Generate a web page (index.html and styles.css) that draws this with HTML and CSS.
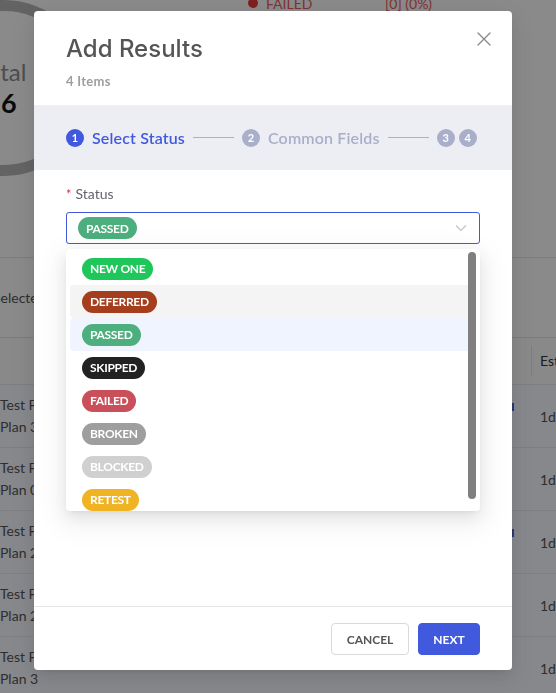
FILE: index.html
```html
<!DOCTYPE html>
<html lang="en">
<head>
<meta charset="utf-8">
<title>Add Results</title>
<link rel="stylesheet" href="styles.css">
</head>
<body>
<div class="page">
  <section class="summary">
    <div class="donut">
      <span class="donut-label">Total</span>
      <span class="donut-value">16</span>
    </div>
    <ul class="legend">
      <li class="legend-item"><span class="dot"></span><span class="legend-name">FAILED</span><span class="legend-val">[0] (0%)</span></li>
    </ul>
  </section>
  <div class="toolbar"><span class="selected">Selected 4 items</span></div>
  <div class="table">
    <div class="thead">
      <div class="th th-name">Title</div>
      <div class="th th-est">Est</div>
    </div>
    <div class="tr"><div class="td-name">Test Flow for<br>Plan 3</div><div class="td-flag"><span class="flag"></span></div><div class="td-est">1d</div></div>
    <div class="tr"><div class="td-name">Test Flow for<br>Plan 0</div><div class="td-flag"></div><div class="td-est">1d</div></div>
    <div class="tr"><div class="td-name">Test Flow for<br>Plan 2</div><div class="td-flag"><span class="flag"></span></div><div class="td-est">1d</div></div>
    <div class="tr"><div class="td-name">Test Flow for<br>Plan 2</div><div class="td-flag"></div><div class="td-est">1d</div></div>
    <div class="tr"><div class="td-name">Test Flow for<br>Plan 3</div><div class="td-flag"></div><div class="td-est">1d</div></div>
  </div>
</div>

<div class="overlay">
  <div class="modal">
    <header class="modal-header">
      <h1 class="modal-title">Add Results</h1>
      <div class="modal-sub">4 Items</div>
      <button class="close" aria-label="Close">
        <svg width="14" height="14" viewBox="0 0 14 14"><path d="M1 1L13 13M13 1L1 13" stroke="#8a8a8a" stroke-width="1.4" fill="none" stroke-linecap="round"/></svg>
      </button>
    </header>
    <nav class="steps">
      <span class="step-num active">1</span><span class="step-text active">Select Status</span>
      <span class="step-line"></span>
      <span class="step-num">2</span><span class="step-text">Common Fields</span>
      <span class="step-line"></span>
      <span class="step-num">3</span><span class="step-num step-tight">4</span>
    </nav>
    <div class="modal-body">
      <label class="field-label"><span class="req">*</span>Status</label>
      <div class="select-wrap">
        <div class="select">
          <span class="tag tag-passed">PASSED</span>
          <svg class="chevron" width="12" height="8" viewBox="0 0 12 8"><path d="M1 1.5L6 6.5L11 1.5" stroke="#c4c4c4" stroke-width="1.2" fill="none"/></svg>
        </div>
        <div class="dropdown">
          <div class="option"><span class="tag tag-new">NEW ONE</span></div>
          <div class="option hovered"><span class="tag tag-deferred">DEFERRED</span></div>
          <div class="option selected-opt"><span class="tag tag-passed">PASSED</span></div>
          <div class="option"><span class="tag tag-skipped">SKIPPED</span></div>
          <div class="option"><span class="tag tag-failed">FAILED</span></div>
          <div class="option"><span class="tag tag-broken">BROKEN</span></div>
          <div class="option"><span class="tag tag-blocked">BLOCKED</span></div>
          <div class="option"><span class="tag tag-retest">RETEST</span></div>
          <span class="scroll-thumb"></span>
        </div>
      </div>
    </div>
    <footer class="modal-footer">
      <button class="btn btn-default">CANCEL</button>
      <button class="btn btn-primary">NEXT</button>
    </footer>
  </div>
</div>
</body>
</html>
```

FILE: styles.css
```css
* { box-sizing: border-box; }
html, body { margin: 0; padding: 0; }
body {
  width: 556px;
  height: 693px;
  overflow: hidden;
  font-family: Lato, "Open Sans", "Liberation Sans", sans-serif;
  background: #f7f7f7;
  color: #333;
}

/* background page */
.page { width: 556px; }
.summary {
  display: flex;
  height: 258px;
  border-bottom: 1px solid #e2e2e2;
  background: #fbfbfb;
}
.donut {
  flex: none;
  width: 176px;
  height: 176px;
  margin-left: -84px;
  padding-right: 6px;
  border: 11px solid #b5b5b5;
  border-radius: 50%;
  display: flex;
  flex-direction: column;
  align-items: center;
  justify-content: center;
}
.donut-label { font-size: 24px; line-height: 30px; color: #8c8c8c; }
.donut-value { font-size: 27px; line-height: 32px; font-weight: 700; color: #111; }
.legend {
  list-style: none;
  margin: -8px 0 0 156px;
  padding: 0;
}
.legend-item { display: flex; align-items: center; height: 22px; font-size: 14px; color: #e85a5a; }
.dot { width: 10px; height: 10px; border-radius: 50%; background: #e63a3a; margin-right: 8px; }
.legend-name { width: 119px; }
.toolbar {
  height: 80px;
  display: flex;
  align-items: center;
  border-bottom: 1px solid #e2e2e2;
  background: #fbfbfb;
}
.selected { margin-left: -7px; font-size: 14px; color: #555; }
.thead {
  height: 47px;
  display: flex;
  align-items: center;
  background: #fafafa;
  border-bottom: 1px solid #e6e6e6;
}
.th { font-size: 14px; color: #333; }
.th-name { flex: 1; padding-left: 60px; }
.th-est {
  flex: none;
  width: 25px;
  border-left: 1px solid #e3e3e3;
  padding-left: 8px;
  height: 30px;
  line-height: 30px;
  white-space: nowrap;
}
.tr {
  height: 63px;
  display: flex;
  align-items: center;
  background: #f4f7fd;
  border-bottom: 1px solid #e4e7ee;
}
.td-name { flex: 1; padding-left: 0; font-size: 14px; line-height: 22px; color: #555; white-space: nowrap; }
.td-flag { flex: none; width: 30px; align-self: flex-start; padding-top: 18px; }
.flag { display: block; width: 4px; height: 8px; background: #4a63e0; }
.td-est { flex: none; width: 16px; font-size: 14px; color: #555; white-space: nowrap; }

/* overlay + modal */
.overlay {
  position: fixed;
  inset: 0;
  background: rgba(0, 0, 0, 0.45);
  padding: 11px 0 0 34px;
}
.modal {
  position: relative;
  width: 478px;
  height: 659px;
  background: #fff;
  border-radius: 4px;
  display: flex;
  flex-direction: column;
  box-shadow: 0 6px 16px rgba(0,0,0,.08), 0 3px 6px -4px rgba(0,0,0,.12), 0 9px 28px 8px rgba(0,0,0,.05);
}
.modal-header { padding: 22px 32px 16px; }
.modal-title {
  margin: 0;
  font-family: Inter, Lato, sans-serif;
  font-size: 24px;
  line-height: 32px;
  font-weight: 500;
  color: #555;
}
.modal-sub {
  margin-top: 8px;
  font-size: 13px;
  line-height: 16px;
  font-weight: 700;
  letter-spacing: 0.3px;
  color: #9e9e9e;
}
.close {
  position: absolute;
  top: 20px;
  right: 20px;
  width: 16px;
  height: 16px;
  padding: 0;
  border: 0;
  background: none;
  display: flex;
  align-items: center;
  justify-content: center;
}
.steps {
  height: 65px;
  flex: none;
  background: #edeef3;
  display: flex;
  align-items: center;
  padding: 0 32px;
  white-space: nowrap;
}
.step-num {
  width: 18px;
  height: 18px;
  border-radius: 50%;
  background: #a9aecb;
  color: #fff;
  font-size: 11px;
  font-weight: 700;
  display: flex;
  align-items: center;
  justify-content: center;
  flex: none;
}
.step-num.active { background: #4159dc; }
.step-tight { margin-left: 4px; }
.step-text {
  flex: none;
  margin-left: 8px;
  font-size: 16px;
  font-weight: 600;
  letter-spacing: 0.15px;
  color: #a9aecb;
}
.step-text.active { color: #4159dc; }
.step-line {
  width: 41px;
  height: 1px;
  background: #a9b0cc;
  margin: 0 8px;
  flex: none;
}
.modal-body {
  flex: 1;
  padding: 13px 32px 0;
}
.field-label {
  display: block;
  font-size: 14px;
  line-height: 22px;
  color: #62636e;
}
.req { color: #d9363e; margin-right: 4px; font-size: 13px; }
.select-wrap { position: relative; margin-top: 7px; }
.select {
  height: 32px;
  border: 1px solid #4159dc;
  border-radius: 3px;
  padding: 0 12px 0 11px;
  display: flex;
  align-items: center;
  justify-content: space-between;
}
.tag {
  display: inline-flex;
  align-items: center;
  height: 22px;
  padding: 0 8px;
  border-radius: 11px;
  font-size: 12px;
  font-weight: 700;
  letter-spacing: -0.3px;
  color: #fff;
  white-space: nowrap;
}
.tag-new { background: #1fc75a; }
.tag-deferred { background: #a53e1c; }
.tag-passed { background: #4caf7d; }
.tag-skipped { background: #222; }
.tag-failed { background: #c9505a; }
.tag-broken { background: #9e9e9e; }
.tag-blocked { background: #d0d0d0; }
.tag-retest { background: #f0b323; }
.dropdown {
  position: absolute;
  top: 37px;
  left: 0;
  right: 0;
  height: 262px;
  overflow: hidden;
  background: #fff;
  border-radius: 4px;
  padding: 3px 4px;
  box-shadow: 0 3px 6px -4px rgba(0,0,0,.12), 0 6px 16px rgba(0,0,0,.08), 0 9px 28px 8px rgba(0,0,0,.05);
}
.option {
  height: 33px;
  display: flex;
  align-items: center;
  padding-left: 12px;
  border-radius: 4px;
}
.option.hovered { background: #f4f4f4; }
.option.selected-opt { background: #eff4fe; }
.scroll-thumb {
  position: absolute;
  top: 3px;
  right: 4px;
  width: 8px;
  height: 247px;
  border-radius: 4px;
  background: #7f7f7f;
}
.modal-footer {
  flex: none;
  border-top: 1px solid #e6e6e6;
  padding: 16px 32px 15px;
  display: flex;
  justify-content: flex-end;
  gap: 9px;
}
.btn {
  height: 32px;
  padding: 0 15px;
  border-radius: 4px;
  font-family: inherit;
  font-size: 12px;
  font-weight: 700;
}
.btn-default { width: 78px; padding: 0; background: #fff; border: 1px solid #d9d9d9; color: #555; }
.btn-primary { width: 62px; padding: 0; background: #4159dc; border: 1px solid #4159dc; color: #fff; }
```
